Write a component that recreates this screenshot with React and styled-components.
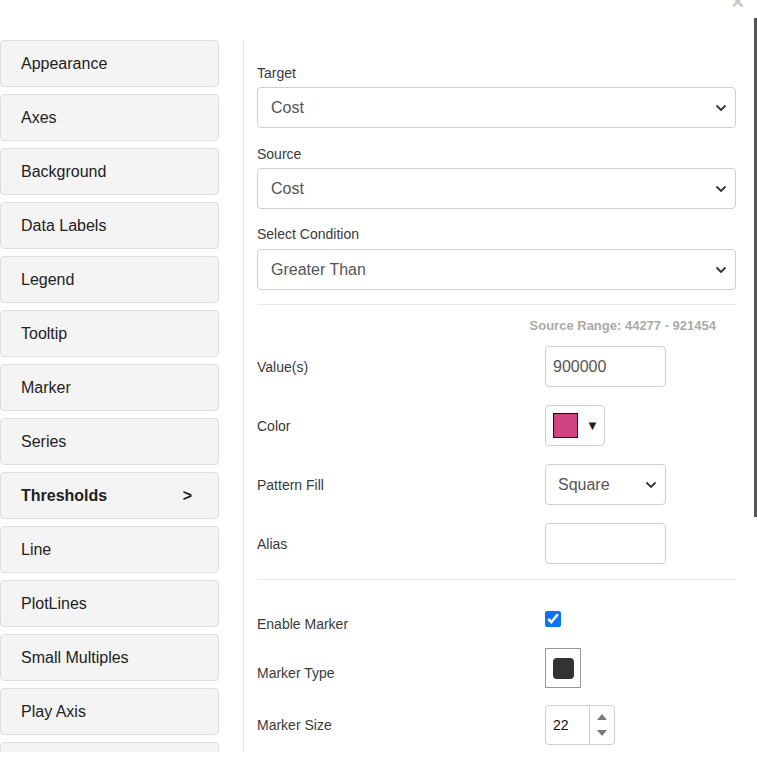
import React from "react";
import styled, { createGlobalStyle } from "styled-components";

const GlobalStyle = createGlobalStyle`
  html, body {
    margin: 0;
    padding: 0;
    background: #fff;
    font-family: "Liberation Sans", Arial, sans-serif;
  }
  * {
    box-sizing: border-box;
  }
`;

const Modal = styled.div`
  position: relative;
  width: 757px;
  height: 763px;
  overflow: hidden;
  background: #fff;
`;

const Header = styled.div`
  height: 40px;
  display: flex;
  justify-content: flex-end;
  align-items: flex-start;
  padding-right: 13px;
`;

const Close = styled.span`
  font-size: 22px;
  font-weight: 700;
  line-height: 1;
  color: #c8c8c8;
  margin-top: -9px;
`;

const Body = styled.div`
  display: flex;
  height: 712px;
`;

const Sidebar = styled.div`
  width: 244px;
  padding-right: 24px;
  border-right: 1px solid #e6e6e6;
  overflow: hidden;
  display: flex;
  flex-direction: column;
  gap: 7px;
`;

const NavButton = styled.div`
  flex: 0 0 47px;
  display: flex;
  align-items: center;
  justify-content: space-between;
  padding: 0 26px 0 20px;
  background: #f4f4f4;
  border: 1px solid #dedede;
  border-radius: 4px;
  font-size: 16px;
  color: #222;
  font-weight: ${(p) => (p.$active ? 700 : 400)};
`;

const Panel = styled.div`
  flex: 1;
  padding: 23px 21px 0 13px;
`;

const Label = styled.div`
  font-size: 14px;
  line-height: 20px;
  color: #3a3a3a;
  margin-bottom: ${(p) => p.$mb || 0}px;
  margin-top: ${(p) => p.$mt || 0}px;
`;

const SelectBox = styled.div`
  height: 41px;
  width: ${(p) => p.$w || "100%"};
  border: 1px solid #cfcfcf;
  border-radius: 4px;
  display: flex;
  align-items: center;
  justify-content: space-between;
  padding: 0 8px 0 ${(p) => p.$pl || 13}px;
  font-size: 16px;
  color: #555;
  background: #fff;
`;

const Divider = styled.div`
  height: 1px;
  background: #e8e8e8;
  margin: ${(p) => p.$m};
`;

const RangeNote = styled.div`
  text-align: right;
  padding-right: 20px;
  font-size: 13px;
  font-weight: 700;
  color: #aaa;
  line-height: 14px;
  margin-bottom: 13px;
`;

const Row = styled.div`
  display: grid;
  grid-template-columns: 288px 1fr;
  align-items: center;
  height: ${(p) => p.$h}px;
  margin-top: ${(p) => p.$mt || 0}px;
`;

const TextInput = styled.div`
  width: 121px;
  height: 41px;
  border: 1px solid #cfcfcf;
  border-radius: 4px;
  display: flex;
  align-items: center;
  padding-left: 7px;
  font-size: 16px;
  color: #555;
`;

const ColorButton = styled.div`
  width: 60px;
  height: 41px;
  border: 1px solid #cfcfcf;
  border-radius: 4px;
  display: flex;
  align-items: center;
  gap: 8px;
  padding-left: 7px;
  font-size: 13px;
  color: #222;
`;

const Swatch = styled.span`
  width: 25px;
  height: 25px;
  border: 1px solid #111;
  background: ${(p) => p.$color};
`;

const Check = styled.input`
  width: 16px;
  height: 16px;
  margin: 0;
  accent-color: #0a75f2;
  position: relative;
  top: -3px;
`;

const MarkerBox = styled.div`
  width: 36px;
  height: 40px;
  border: 1px solid #9a9a9a;
  display: flex;
  align-items: center;
  justify-content: center;
  position: relative;
  top: -5px;
`;

const MarkerShape = styled.span`
  width: 21px;
  height: 21px;
  border-radius: 4px;
  background: #333;
`;

const Spinner = styled.div`
  width: 70px;
  height: 40px;
  border: 1px solid #cfcfcf;
  border-radius: 4px;
  display: flex;
`;

const SpinValue = styled.div`
  flex: 1;
  display: flex;
  align-items: center;
  padding-left: 7px;
  font-size: 14px;
  color: #111;
  border-right: 1px solid #cfcfcf;
`;

const SpinArrows = styled.div`
  width: 24px;
  display: flex;
  flex-direction: column;
  justify-content: space-around;
  align-items: center;
  padding: 3px 0;
`;

const Scrollbar = styled.div`
  position: absolute;
  right: 0;
  top: 18px;
  width: 3px;
  height: 499px;
  background: #555;
`;

const Chevron = () => (
  <svg width="12" height="8" viewBox="0 0 12 8">
    <path d="M1.5 1.5 6 6l4.5-4.5" fill="none" stroke="#333" strokeWidth="1.8" />
  </svg>
);

const Tri = ({ up }) => (
  <svg width="10" height="6" viewBox="0 0 10 6">
    <path d={up ? "M0 6 5 0l5 6z" : "M0 0h10L5 6z"} fill="#7a7a7a" />
  </svg>
);

const navItems = [
  "Appearance",
  "Axes",
  "Background",
  "Data Labels",
  "Legend",
  "Tooltip",
  "Marker",
  "Series",
  "Thresholds",
  "Line",
  "PlotLines",
  "Small Multiples",
  "Play Axis",
  "",
];

export default function App() {
  return (
    <Modal>
      <GlobalStyle />
      <Header>
        <Close>×</Close>
      </Header>
      <Body>
        <Sidebar>
          {navItems.map((item, i) => (
            <NavButton key={i} $active={item === "Thresholds"}>
              <span>{item}</span>
              {item === "Thresholds" && <span>&gt;</span>}
            </NavButton>
          ))}
        </Sidebar>
        <Panel>
          <Label $mb={4}>Target</Label>
          <SelectBox>
            Cost <Chevron />
          </SelectBox>
          <Label $mt={16} $mb={4}>Source</Label>
          <SelectBox>
            Cost <Chevron />
          </SelectBox>
          <Label $mt={15} $mb={5}>Select Condition</Label>
          <SelectBox>
            Greater Than <Chevron />
          </SelectBox>
          <Divider $m="14px 0 14px" />
          <RangeNote>Source Range: 44277 - 921454</RangeNote>
          <Row $h={41}>
            <Label>Value(s)</Label>
            <TextInput>900000</TextInput>
          </Row>
          <Row $h={41} $mt={18}>
            <Label>Color</Label>
            <ColorButton>
              <Swatch $color="#d14283" />▼
            </ColorButton>
          </Row>
          <Row $h={41} $mt={18}>
            <Label>Pattern Fill</Label>
            <SelectBox $w="121px" $pl={12}>
              Square <Chevron />
            </SelectBox>
          </Row>
          <Row $h={41} $mt={18}>
            <Label>Alias</Label>
            <TextInput />
          </Row>
          <Divider $m="15px 0 0" />
          <Row $h={20} $mt={34}>
            <Label>Enable Marker</Label>
            <div>
              <Check type="checkbox" defaultChecked />
            </div>
          </Row>
          <Row $h={40} $mt={19}>
            <Label>Marker Type</Label>
            <div>
              <MarkerBox>
                <MarkerShape />
              </MarkerBox>
            </div>
          </Row>
          <Row $h={40} $mt={12}>
            <Label>Marker Size</Label>
            <Spinner>
              <SpinValue>22</SpinValue>
              <SpinArrows>
                <Tri up />
                <Tri />
              </SpinArrows>
            </Spinner>
          </Row>
        </Panel>
      </Body>
      <Scrollbar />
    </Modal>
  );
}
